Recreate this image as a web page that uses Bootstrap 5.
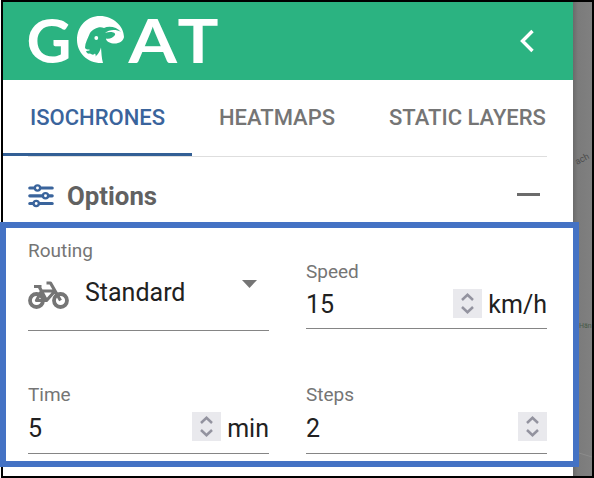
<!DOCTYPE html>
<html lang="en">
<head>
<meta charset="utf-8">
<meta name="viewport" content="width=device-width, initial-scale=1">
<title>GOAT</title>
<link href="https://cdn.jsdelivr.net/npm/bootstrap@5.3.0/dist/css/bootstrap.min.css" rel="stylesheet">
<style>
body{font-family:Roboto,"Liberation Sans",sans-serif;width:594px;height:478px;background:#fff}
.window{width:593px;height:478px;margin-left:1px;border:2px solid #000}
.panel{width:570px;background:#fff}
.map{width:19px;background:linear-gradient(90deg,#6b6b6b,#7b7b7b 5px,#808080)}
.brandbar{height:78px;background:#2bb381;padding:0 39px 0 24px}
.tabs{height:76px;font-size:22px;font-weight:500;color:#757575}
.tabs button{border:0;background:none;padding:1px 0 0;color:inherit;font-weight:inherit;white-space:nowrap;border-bottom:3px solid transparent}
.tabs .on{color:#3a649c;border-color:#335f95}
.t1{width:189px}.t2{width:170px}.t3{width:211px}
.rule{height:1px;margin:0 26px 0 25px;background:#dedede}
.opts{height:65px;padding:12px 33px 0 25px}
.opts h2{font-size:25.8px;font-weight:700;color:#616161;line-height:30px;margin:0 0 0 13px;width:90px}
.opts .sliders{margin-top:15px}
.opts .minus{margin-top:24px}
.fields{padding:0 26px 0 25px;display:grid;grid-template-columns:241px 241px;column-gap:37px;grid-template-rows:107px 125px}
.field{border-bottom:1px solid #858585;color:#212121;font-size:25px;line-height:30px}
.field label{display:block;font-size:19px;line-height:22px;color:#757575;margin-bottom:6px}
.field .num{line-height:32px;height:29px}
.upper{padding-bottom:10px}
.lower{padding-bottom:12px}
.lower .num{line-height:34px}
.routing{margin-bottom:-2px;padding-top:18px}
.routing .pick{margin-top:10px}
.routing .bike{margin-top:3px}
.routing .caret{margin:2px 11px 0 auto}
.spin{width:29px;height:29px;background:#e9e9ed;margin-right:6px}
.callout{left:0;top:222px;width:579px;height:245px;border:6px solid #4472c4;pointer-events:none}
</style>
</head>
<body class="position-relative overflow-hidden">
<div class="window d-flex overflow-hidden">
  <main class="panel flex-shrink-0">
    <header class="brandbar d-flex align-items-center justify-content-between">
      <svg width="196" height="78" viewBox="27 2 196 78" fill="#fff" role="img" aria-label="GOAT">
        <g font-family="Lato, sans-serif" font-weight="700" font-size="62">
          <text x="26.500" y="62.500" textLength="45" lengthAdjust="spacingAndGlyphs">G</text>
          <text x="128.500" y="62.500" textLength="48.500" lengthAdjust="spacingAndGlyphs">A</text>
          <text x="177.500" y="62.500" textLength="41" lengthAdjust="spacingAndGlyphs">T</text>
        </g>
        <path d="M103 63C88 64 77 53 77 40C77 26 87 16 100 16C113 16 124 26 124 37C123.500 41 119 44 113 43.500C109 43 106 41 106 38.500C109 39.500 113 38 115 35C116 32.500 111 31 105 33C109 29.500 116 29 121 32C117 27 109 25.500 104 28C99 26 93 29 90 33C88 38 85 43 85 47.500C85.500 49 86 49.500 89.500 49.500L89.500 50.500L86 51C86.500 53 88 54 90 53.500C92 55 94 55 95 53.500C95.500 54.500 96 55 95.500 56.500C99 53.500 100 50.500 101 47.500C101.500 53 101.500 58 103 63Z"/>
        <circle cx="96.300" cy="38" r="1.900"/>
      </svg>
      <svg width="14" height="24" viewBox="0 0 14 24" fill="none" stroke="#fff" stroke-width="3.400"><path d="M12.500 2L2.500 12L12.500 22"/></svg>
    </header>
    <nav class="tabs d-flex">
      <button class="t1 on">ISOCHRONES</button><button class="t2">HEATMAPS</button><button class="t3">STATIC LAYERS</button>
    </nav>
    <div class="rule"></div>
    <section class="opts d-flex align-items-start">
      <svg class="sliders" width="26" height="24" viewBox="0 0 26 24" fill="#fff" stroke="#3a649c" stroke-width="3.200" stroke-linecap="round"><path d="M1.800 4H24.200M1.800 11.800H24.200M1.800 19.500H24.200"/><circle cx="9.500" cy="4" r="2.600" stroke-width="2.300"/><circle cx="17.500" cy="11.800" r="2.600" stroke-width="2.300"/><circle cx="8.200" cy="19.500" r="2.600" stroke-width="2.300"/></svg>
      <h2 class="mt-2 pt-1">Options</h2>
      <svg class="minus ms-auto" width="23" height="4" viewBox="0 0 23 4"><path d="M0 1.500H23" stroke="#6b6b6b" stroke-width="3"/></svg>
    </section>
    <section class="fields">
      <div class="field routing d-flex flex-column">
        <label>Routing</label>
        <div class="pick d-flex align-items-start">
          <svg class="bike" width="41" height="29" viewBox="0 0 41 29" fill="none" stroke="#757575" stroke-width="3.800" stroke-linejoin="round"><circle cx="8.500" cy="19.500" r="6.500"/><circle cx="32.500" cy="19.500" r="6.500"/><path d="M6 5.500H13.500M18.500 2H22.500L32.500 19.500M13 10H27L18.500 19.500H8.500L13.500 10L18.500 19.500M13.500 10L11 5.500" stroke-width="3.200"/></svg>
          <span class="ms-3">Standard</span>
          <svg class="caret" width="17" height="8" viewBox="0 0 17 8"><path d="M1 0H16L8.500 8Z" fill="#757575"/></svg>
        </div>
      </div>
      <div class="field upper d-flex flex-column justify-content-end"><label>Speed</label><div class="num d-flex"><span>15</span><span class="spin ms-auto d-flex"><svg width="29" height="29" viewBox="0 0 29 29" fill="none" stroke="#93939f" stroke-width="2.500"><path d="M9 11L14.500 5.800L20 11M9 18L14.500 23.200L20 18"/></svg></span><span>km/h</span></div></div>
      <div class="field lower d-flex flex-column justify-content-end"><label>Time</label><div class="num d-flex"><span>5</span><span class="spin ms-auto d-flex"><svg width="29" height="29" viewBox="0 0 29 29" fill="none" stroke="#93939f" stroke-width="2.500"><path d="M9 11L14.500 5.800L20 11M9 18L14.500 23.200L20 18"/></svg></span><span>min</span></div></div>
      <div class="field lower d-flex flex-column justify-content-end"><label>Steps</label><div class="num d-flex"><span>2</span><span class="spin ms-auto me-0 d-flex"><svg width="29" height="29" viewBox="0 0 29 29" fill="none" stroke="#93939f" stroke-width="2.500"><path d="M9 11L14.500 5.800L20 11M9 18L14.500 23.200L20 18"/></svg></span></div></div>
    </section>
  </main>
  <aside class="map flex-shrink-0">
    <svg class="d-block" width="19" height="474" viewBox="573 2 19 474"><g font-family="Roboto, sans-serif" fill="#4c4c4c"><text transform="translate(577 165) rotate(-28)" font-size="9">ach</text><text x="579" y="328" font-size="7" fill="#475a47">Hän</text></g><path d="M579 453L592 457" stroke="#8c8c8c" fill="none"/></svg>
  </aside>
</div>
<div class="callout position-absolute"></div>
</body>
</html>
